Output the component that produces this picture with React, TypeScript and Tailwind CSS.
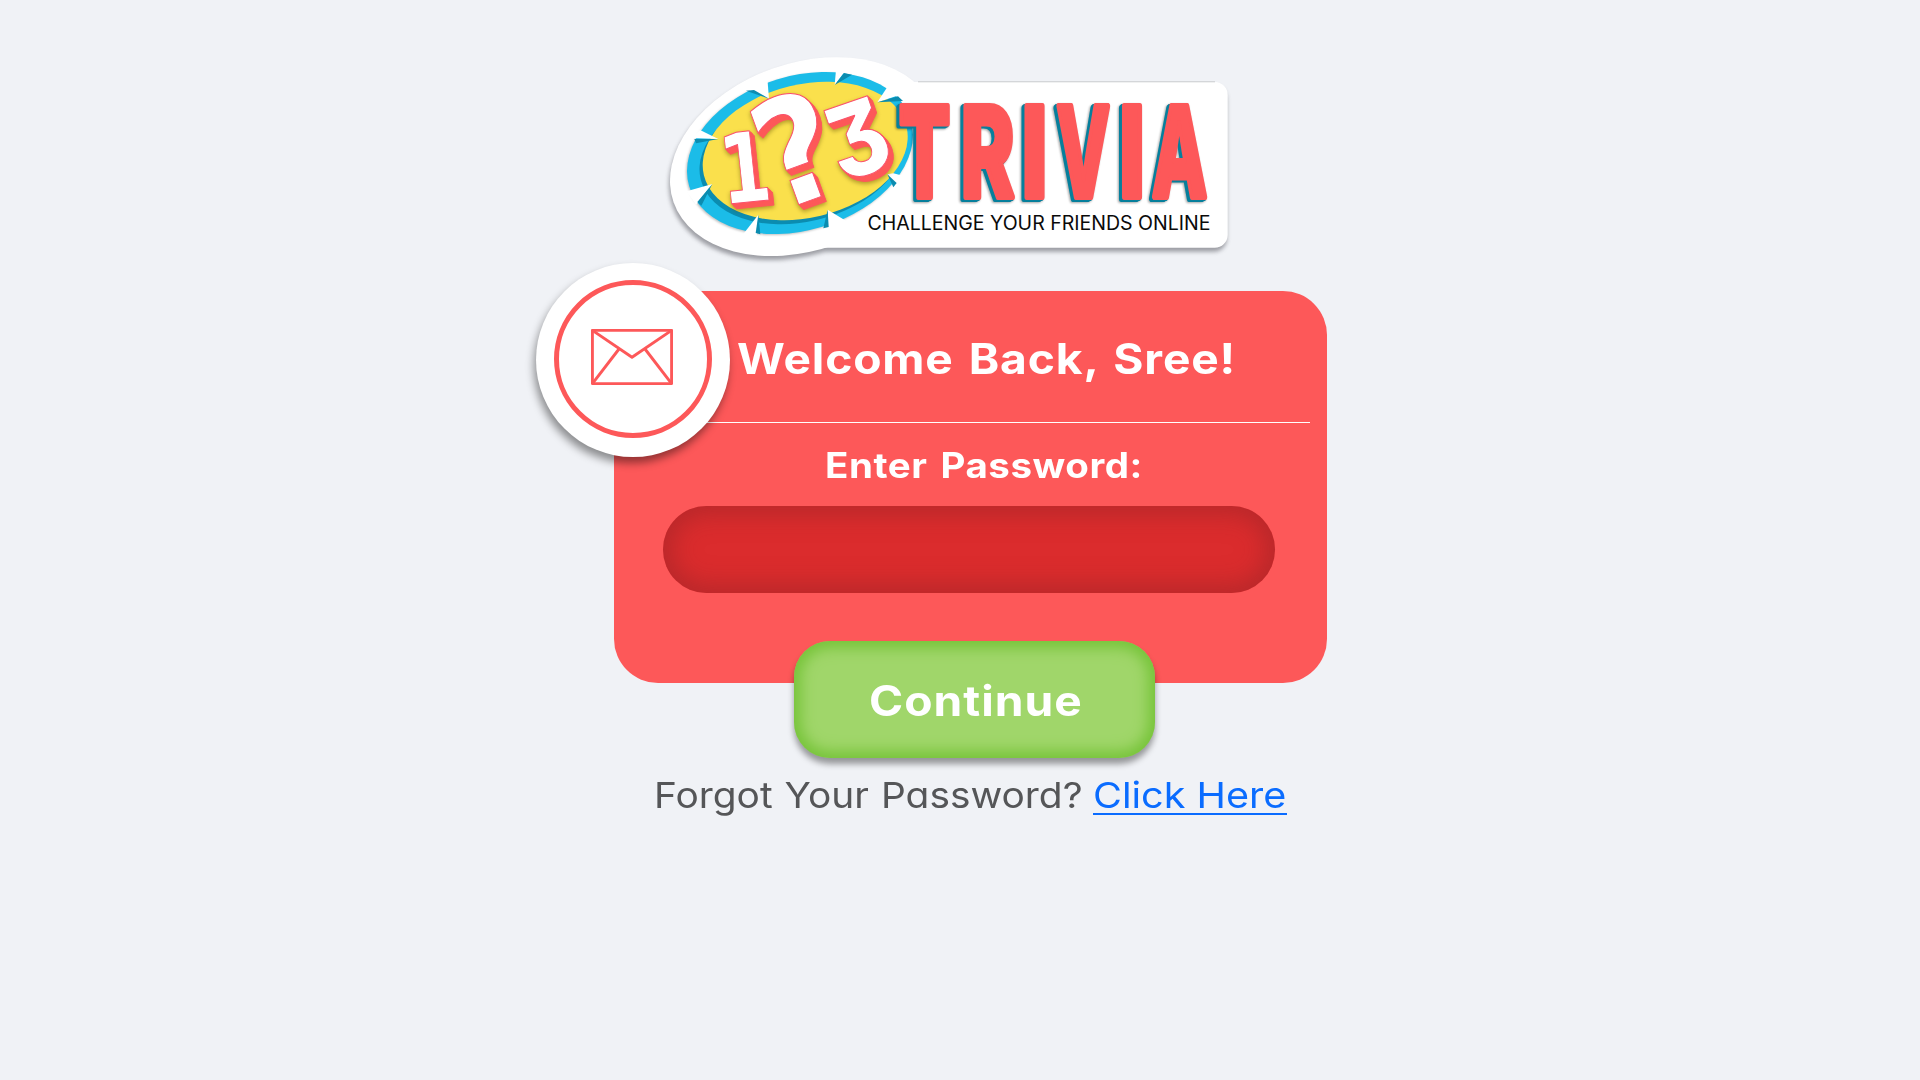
const TRIVIA = [
  { ch: "T", cx: 924.5, w: 50 },
  { ch: "R", cx: 987.5, w: 49 },
  { ch: "I", cx: 1034.5, w: 17 },
  { ch: "V", cx: 1083.3, w: 55.5 },
  { ch: "I", cx: 1132, w: 17 },
  { ch: "A", cx: 1179.5, w: 57 },
];

/* Ink widths of the heavy capitals at 1000 units per em */
const INK: Record<string, number> = { T: 650, R: 600, I: 185, V: 790, A: 790 };

function TriviaWord() {
  return (
    <g fill="#fd5859" stroke="#fd5859" strokeWidth="6" strokeLinejoin="round" fontSize="125" textAnchor="middle" className="font-['Inter',sans-serif] font-extrabold">
      {TRIVIA.map((l, i) => (
        <text key={i} transform={`translate(${l.cx} 196.5) scale(${l.w / (INK[l.ch] * 0.126)} 1)`}>
          {l.ch}
        </text>
      ))}
    </g>
  );
}

function Numerals() {
  return (
    <g fill="#fff" stroke="#fb4f6a" strokeWidth="1" strokeLinejoin="round" textAnchor="middle">
      <text transform="translate(748.5 202) rotate(-6) scale(.76 1)" fontSize="97" className="font-['DejaVu_Sans',sans-serif] font-bold">
        1
      </text>
      <text transform="translate(814 199) rotate(-20) scale(.92 1)" fontSize="148" className="font-['DejaVu_Sans',sans-serif] font-bold">
        ?
      </text>
      <text
        transform="translate(869.5 173.5) rotate(-19) scale(.89 1)"
        fontSize="102"
        className="font-['Inter',sans-serif] font-extrabold [font-feature-settings:'cv09']"
      >
        3
      </text>
    </g>
  );
}

const WEDGES = [
  { light: "258,118 322,85 327,146", dark: "258,122 282,120 327,146" },
  { light: "528,60 558,60 524,105", dark: "552,69 576,74 524,105" },
  { light: "684,108 735,130 652,157", dark: "714,139 729,153 652,157" },
  { light: "120,240 95,264 175,267", dark: "103,267 175,267 108,280" },
  { light: "80,424 108,464 157,402", dark: "112,456 124,467 157,402" },
  { light: "250,552 290,562 295,494", dark: "287,549 301,553 295,494" },
  { light: "503,545 560,514 503,479", dark: "490,535 506,531 503,479" },
  { light: "700,370 740,380 708,404 682,373", dark: "710,399 700,412 682,373" },
];

function Logo() {
  return (
    <svg className="block h-[220px] w-[580px]" viewBox="660 50 580 220" role="img" aria-label="123 Trivia">
      <g className="[filter:drop-shadow(-1px_4px_2px_rgba(40,40,50,.42))]">
        <g fill="#fff">
          <ellipse rx="138.2" ry="93.5" transform="translate(804 156.6) rotate(-19.4)" />
          <rect x="800" y="82" width="427.7" height="165.7" rx="13" />
        </g>
      </g>
      <path d="M918 81.8H1215" stroke="#b9babd" strokeWidth=".7" />
      <g className="[filter:drop-shadow(-.5px_1px_1px_rgba(0,0,0,.25))]">
        <ellipse rx="115.7" ry="77.1" fill="#1bbce8" transform="translate(800 153) rotate(-16.7)" />
      </g>
      <ellipse rx="104.2" ry="66.7" fill="#0b8cb0" transform="translate(802 155) rotate(-13.5)" />
      <ellipse rx="104.2" ry="66.7" fill="#fae04c" transform="translate(805.2 151) rotate(-13.5)" />
      <g transform="translate(660 50) scale(.33333)">
        {WEDGES.map((w, i) => (
          <g key={i}>
            <polygon points={w.light} fill="#fff" />
            <polygon points={w.dark} fill="#0b8cb0" />
          </g>
        ))}
      </g>
      <g className="[filter:drop-shadow(1px_1px_0_#fd5859)_drop-shadow(2px_2px_0_#fd5859)_drop-shadow(2px_2px_0_#fd5859)_drop-shadow(0_2px_2px_rgba(90,70,0,.45))]">
        <Numerals />
      </g>
      <g className="[filter:drop-shadow(-1px_1px_0_#067f9c)_drop-shadow(-2px_1px_0_#067f9c)_drop-shadow(-1px_1px_1px_rgba(0,0,0,.35))]">
        <TriviaWord />
      </g>
      <text x="867.5" y="230" textLength="343" lengthAdjust="spacingAndGlyphs" fontSize="19.4" fill="#0a0a0a" className="font-['Inter',sans-serif] font-normal">
        CHALLENGE YOUR FRIENDS ONLINE
      </text>
    </svg>
  );
}

function MailBadge() {
  return (
    <div className="absolute -left-[78px] -top-7 flex size-[194px] items-center justify-center rounded-full bg-white shadow-[-2px_6px_8px_rgba(0,0,0,.42)]">
      <div className="-mt-[2px] flex size-[158px] items-center justify-center rounded-full border-[5px] border-[#fd5859]">
        <svg className="-ml-0.5 -mt-1 h-[56px] w-[82px]" viewBox="0 0 82 56" fill="none" stroke="#fd5859" strokeWidth="2.9" strokeLinejoin="round">
          <rect x="1.4" y="1.4" width="79.2" height="53.2" />
          <path d="M1.4 1.4 41 28.3 80.6 1.4M1.4 54.6 28 20M80.6 54.6 54 20" />
        </svg>
      </div>
    </div>
  );
}

export default function App() {
  return (
    <main className="flex h-[1080px] w-[1920px] flex-col overflow-hidden bg-[#f0f2f6] font-['Inter',sans-serif]">
      <header className="ml-[660px] mt-[50px] h-[220px] shrink-0">
        <Logo />
      </header>

      <section className="relative ml-[614px] mt-[21px] flex h-[392px] w-[713px] shrink-0 flex-col rounded-[44px] bg-[#fd5859] text-white">
        <div className="ml-[22px] mr-[17px] flex h-[132px] shrink-0 items-center border-b border-white pl-[101px] pt-[5px]">
          <h1 className="origin-left scale-x-110 whitespace-nowrap text-[42px] font-bold leading-[50px] tracking-[0.75px] [word-spacing:3px]">Welcome Back, Sree!</h1>
        </div>
        <MailBadge />
        <label
          htmlFor="password"
          className="ml-[211px] mt-[21px] origin-left scale-x-110 shrink-0 self-start whitespace-nowrap text-[35px] font-bold leading-[42px] tracking-[0.5px] [word-spacing:3px]"
        >
          Enter Password:
        </label>
        <input
          id="password"
          type="password"
          className="ml-[49px] mt-5 h-[87px] w-[612px] shrink-0 rounded-[44px] bg-[#db2c2d] px-10 text-3xl shadow-[inset_0_0_24px_8px_rgba(150,35,40,.5)] outline-none"
        />
        <button
          type="button"
          className="ml-[180px] mt-[48px] flex h-[117px] w-[361px] shrink-0 items-center rounded-[36px] bg-[#a0d66a] pl-[75px] pt-[3px] shadow-[0_6px_6px_rgba(0,0,0,.38),inset_0_0_14px_7px_#77c43a]"
        >
          <span className="origin-left scale-x-110 whitespace-nowrap text-[42px] font-bold leading-[50px] tracking-[0.9px]">Continue</span>
        </button>
      </section>

      <p className="ml-[654px] mt-[90px] flex shrink-0 text-[36px] leading-[44px] text-[#555658] [font-feature-settings:'cv11']">
        <span className="w-[439px] origin-left scale-x-[1.08] whitespace-nowrap [word-spacing:1px]">Forgot Your Password?</span>
        <a href="#" className="h-[42px] w-[194px] border-b-2 border-[#0a6cff] text-[#0a6cff]">
          <span className="inline-block origin-left scale-x-110 whitespace-nowrap">Click Here</span>
        </a>
      </p>
    </main>
  );
}
